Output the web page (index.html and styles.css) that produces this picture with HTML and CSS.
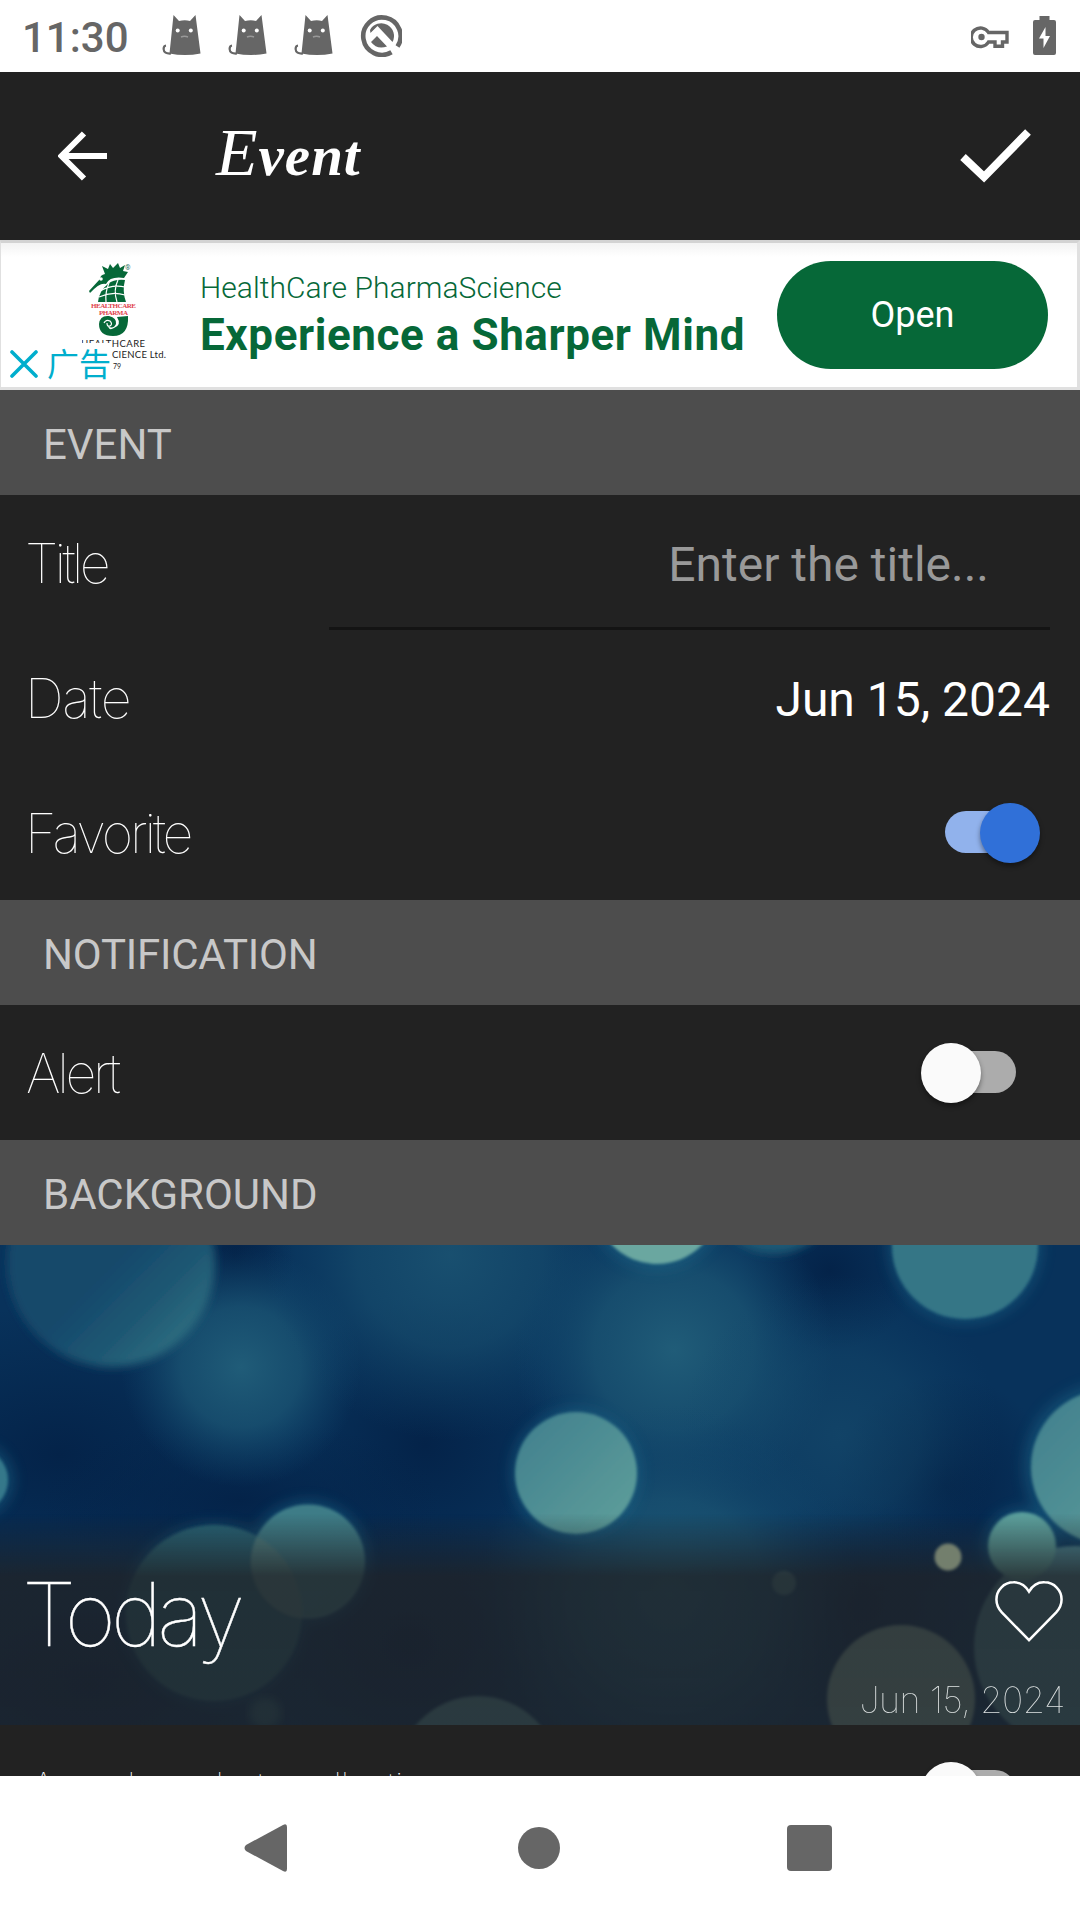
FILE: index.html
```html
<!DOCTYPE html>
<html lang="en">
<head>
<meta charset="utf-8">
<title>Event</title>
<link rel="stylesheet" href="styles.css">
</head>
<body>
<svg width="0" height="0" class="defs">
  <defs>
    <symbol id="cat" viewBox="0 0 40 42">
      <path d="M11.500 1 17 7Q23 5.500 28 7L33.500 1 38.500 39.500Q23 42.500 7.500 39.500Z" fill="#666"/>
      <path d="M9 39.500Q1.800 40 1.600 35Q1.600 31.800 4 31.500" fill="none" stroke="#666" stroke-width="2.200"/>
      <circle cx="15.700" cy="16.500" r="2" fill="#fff"/><circle cx="28.800" cy="16.500" r="2" fill="#fff"/>
      <path d="M19 23Q22.500 21.500 26 23" fill="none" stroke="#999" stroke-width="1.500"/>
    </symbol>
  </defs>
</svg>
<header class="status">
  <span class="clock">11:30</span>
  <svg class="cat" width="40" height="42"><use href="#cat"/></svg>
  <svg class="cat" width="40" height="42"><use href="#cat"/></svg>
  <svg class="cat" width="40" height="42"><use href="#cat"/></svg>
  <svg class="q" width="42" height="42" viewBox="0 0 42 42">
    <path d="M31.500 37.200A18.700 18.700 0 1 1 37.500 31.500" fill="none" stroke="#666" stroke-width="4.600"/>
    <path d="M10 15A12.500 12.500 0 0 1 32.500 27L17.500 11 10.500 18ZM11 27 17 21 27 31.500Q17 35 11 27Z" fill="#666"/>
    <path d="M9.500 22.500 16 16 36 36" fill="none" stroke="#fff" stroke-width="4"/>
  </svg>
  <svg class="key" width="38" height="24" viewBox="0 0 38 24">
    <path d="M17.500 6.500A9.300 9.300 0 1 0 17.500 16H24V20.300H31.500V16H36V6.500Z" fill="none" stroke="#666" stroke-width="3.400"/>
    <circle cx="10.500" cy="11" r="3.200" fill="#666"/>
  </svg>
  <svg class="battery" width="23" height="39" viewBox="0 0 23 39">
    <path d="M6.500 0H16.500V4H21Q23 4 23 6V37Q23 39 21 39H2Q0 39 0 37V6Q0 4 2 4H6.500Z" fill="#666"/>
    <path d="M12.500 11V20H17L10.500 32V22.500H6Z" fill="#fff"/>
  </svg>
</header>

<div class="appbar">
  <svg width="50" height="50" viewBox="0 0 50 50"><path d="M49 25H5M26 2.500 3.500 25 26 47.500" fill="none" stroke="#fff" stroke-width="6"/></svg>
  <h1>Event</h1>
  <svg class="check" width="72" height="54" viewBox="0 0 72 54"><path d="M3 28 24 48 68 3" fill="none" stroke="#fff" stroke-width="8"/></svg>
</div>

<section class="ad">
  <div class="brand">
    <svg width="90" height="110" viewBox="0 0 90 110">
      <g fill="#066838">
        <path d="M7 29 18 17Q18 13 23 12L20 4 26 7 28 2 31 6 36 1 38 6 43 3 41 9 46 10 42 16Q28 14 24 22Q18 20 8 31Z"/>
        <path d="M26 22Q32 17 43 18Q40 29 44 40H16Q17 29 26 22Z"/>
        <path d="M46 54Q47 74 31 74Q17 74 17 62Q18 53 27 54Q35 56 34 62Q31 68 26 64Q27 69 32 66Q40 63 35 55Z"/>
      </g>
      <circle cx="19" cy="17" r="1.800" fill="#fff"/>
      <path d="M22 61Q24 57 28 59Q31 62 28 64Q25 65 25 61M18 29Q30 22 43 25M17 35Q30 29 43 33M27 21Q23 30 24 40M36 18Q31 28 35 40" fill="none" stroke="#fff" stroke-width="1.200"/>
      <g font-family="Liberation Serif, serif" font-weight="700" fill="#e0434c" font-size="7">
        <text x="9" y="46" textLength="45">HEALTHCARE</text><text x="17" y="53" textLength="29">PHARMA</text>
      </g>
      <text x="43" y="8" font-size="7" font-family="Roboto, sans-serif" fill="#376">®</text>
      <g font-family="Lato, sans-serif" font-size="9.500" fill="#222">
        <text x="-1" y="85" textLength="64">HEALTHCARE</text><text x="30" y="96" textLength="54">CIENCE Ltd.</text>
        <text x="31" y="107" font-size="7">79</text>
      </g>
    </svg>
  </div>
  <div class="adchoice">
    <svg width="28" height="28" viewBox="0 0 28 28"><path d="M2 2 26 26M26 2 2 26" stroke="#00aecd" stroke-width="3.600" stroke-linecap="round"/></svg>
    <span>广告</span>
  </div>
  <div class="copy"><p class="adv">HealthCare PharmaScience</p><p class="line">Experience a Sharper Mind</p></div>
  <a class="open">Open</a>
</section>

<main>
  <h2>EVENT</h2>
  <div class="row"><span class="label l-title">Title</span><span class="field">Enter the title...</span></div>
  <div class="row"><span class="label l-date">Date</span><span class="value">Jun 15, 2024</span></div>
  <div class="row"><span class="label l-fav">Favorite</span><span class="switch on"></span></div>
  <h2 class="wide">NOTIFICATION</h2>
  <div class="row"><span class="label l-alert">Alert</span><span class="switch"></span></div>
  <h2>BACKGROUND</h2>
  <div class="cover">
    <svg class="bokeh" width="1080" height="480" viewBox="0 0 1080 480">
      <defs>
        <radialGradient id="soft"><stop offset="0" stop-color="#205c78"/><stop offset=".5" stop-color="#1a5372" stop-opacity=".8"/><stop offset="1" stop-color="#10456b" stop-opacity="0"/></radialGradient>
        <radialGradient id="dark"><stop offset="0" stop-color="#042349"/><stop offset="1" stop-color="#042349" stop-opacity="0"/></radialGradient>
        <linearGradient id="big" x1="0" y1="0" x2="1" y2="1"><stop offset=".5" stop-color="#14486b"/><stop offset=".7" stop-color="#1f5873"/><stop offset=".86" stop-color="#2d6d80"/></linearGradient>
        <linearGradient id="mid" x1="0" y1="0" x2="1" y2="1"><stop offset="0" stop-color="#3f7e8d"/><stop offset="1" stop-color="#60a09b"/></linearGradient>
        <linearGradient id="shade" x1="0" y1="0" x2="0" y2="1"><stop offset=".56" stop-color="#202327" stop-opacity="0"/><stop offset=".69" stop-color="#202327" stop-opacity=".8"/><stop offset="1" stop-color="#202327" stop-opacity=".78"/></linearGradient>
        <filter id="b2"><feGaussianBlur stdDeviation="1.500"/></filter>
        <filter id="b4"><feGaussianBlur stdDeviation="4"/></filter>
        <filter id="b9" x="-40%" y="-40%" width="180%" height="180%"><feGaussianBlur stdDeviation="7"/></filter>
      </defs>
      <rect width="1080" height="480" fill="#08325b"/>
      <ellipse cx="60" cy="210" rx="230" ry="150" fill="url(#dark)"/>
      <ellipse cx="425" cy="200" rx="150" ry="150" fill="url(#dark)"/>
      <ellipse cx="240" cy="255" rx="200" ry="80" fill="url(#dark)"/>
      <ellipse cx="830" cy="25" rx="90" ry="80" fill="url(#dark)"/>
      <ellipse cx="235" cy="10" rx="60" ry="70" fill="url(#dark)"/>
      <ellipse cx="945" cy="240" rx="110" ry="110" fill="url(#dark)"/>
      <ellipse cx="90" cy="440" rx="220" ry="130" fill="url(#dark)"/>
      <ellipse cx="410" cy="400" rx="150" ry="130" fill="url(#dark)"/>
      <ellipse cx="850" cy="360" rx="130" ry="110" fill="url(#dark)"/>
      <circle cx="241" cy="122" r="120" fill="url(#soft)"/>
      <circle cx="450" cy="10" r="185" fill="url(#soft)" opacity=".7"/>
      <circle cx="674" cy="105" r="160" fill="url(#soft)"/>
      <circle cx="840" cy="190" r="160" fill="url(#soft)" opacity=".4"/>
      <circle cx="670" cy="350" r="190" fill="url(#soft)"/>
      <g filter="url(#b9)" fill="#1c6a8c" opacity=".45">
        <circle cx="308" cy="316" r="61"/><circle cx="214" cy="368" r="90"/><circle cx="576" cy="228" r="65"/><circle cx="1108" cy="222" r="84"/><circle cx="965" cy="1" r="77"/><circle cx="657" cy="-44" r="69"/><circle cx="-24" cy="235" r="38"/><circle cx="1022" cy="301" r="38"/>
      </g>
      <circle cx="774" cy="-55" r="64" fill="#1d5875" filter="url(#b4)"/>
      <circle cx="111" cy="18" r="104" fill="url(#big)" filter="url(#b4)"/>
      <g filter="url(#b2)">
        <circle cx="-24" cy="235" r="32" fill="#35788a"/>
        <circle cx="214" cy="368" r="88" fill="#286274"/>
        <circle cx="308" cy="316.500" r="57" fill="#417f89" opacity=".95"/>
        <path d="M251 317A57 57 0 0 0 302 373A88 88 0 0 0 258 292A57 57 0 0 0 251 317" fill="#5c8684" opacity=".6"/>
        <circle cx="576" cy="228" r="61" fill="url(#mid)"/>
        <circle cx="657" cy="-44" r="63" fill="#6ba7a0"/>
        <circle cx="965" cy="1" r="73" fill="#367686"/>
        <circle cx="1075" cy="402" r="101" fill="#4b8795"/>
        <circle cx="1108" cy="222" r="77" fill="url(#mid)"/>
        <circle cx="1022" cy="301" r="34" fill="#5ba09d"/>
        <circle cx="784" cy="338" r="12" fill="#427783"/>
        <circle cx="478" cy="532" r="81" fill="#508a95"/>
        <circle cx="901" cy="454" r="74" fill="#7ca39a"/>
      </g>
      <circle cx="265" cy="468" r="16" fill="#265c70" filter="url(#b4)"/>
      <rect width="1080" height="480" fill="url(#shade)"/>
      <circle cx="948" cy="312" r="13.500" fill="#737f6d" filter="url(#b2)"/>
    </svg>
    <span class="today">Today</span>
    <svg class="heart" width="68" height="63" viewBox="0 0 70 64"><path d="M35 61.500 7 33Q1.500 27 1.500 20A17.500 17.500 0 0 1 19 2Q29 1.500 35 11.500Q41 1.500 51 2A17.500 17.500 0 0 1 68.500 20Q68.500 27 63 33Z" fill="none" stroke="#fff" stroke-width="2.600"/></svg>
    <span class="when">Jun 15, 2024</span>
  </div>
  <div class="row tail"><span class="hint">A random photo collection</span><span class="switch"></span></div>
</main>

<nav>
  <svg width="1080" height="144" viewBox="0 0 1080 144" fill="#666">
    <path d="M246 69 283 49Q287 47 287 51V93Q287 97 283 95L246 75Q243 72 246 69Z"/>
    <circle cx="539" cy="72" r="21"/><rect x="787" y="49" width="45" height="46" rx="4"/>
  </svg>
</nav>
</body>
</html>
```
FILE: styles.css
```css
* { box-sizing: border-box; margin: 0; padding: 0; }
body {
  width: 1080px; height: 1920px; overflow: hidden;
  display: flex; flex-direction: column;
  background: #222; color: #fff; font-family: Roboto, sans-serif;
}
svg { display: block; flex: none; }
.defs { position: absolute; }

.status { height: 72px; flex: none; background: #fff; display: flex; align-items: center; padding: 0 24px 0 22px; }
.clock { width: 140px; font-size: 42px; font-weight: 500; color: #666; padding-top: 3px; }
.cat { margin-right: 26px; margin-top: -2px; }
.q { margin-top: -1px; }
.key { margin-left: auto; margin-right: 24px; margin-top: 3px; }
.battery { margin-top: -1px; }

.appbar { height: 168px; flex: none; display: flex; align-items: center; padding: 0 48px 0 58px; }
.appbar h1 {
  margin-left: 108px; padding-bottom: 4px; height: 84px;
  font: italic 700 57px/84px "Liberation Serif", serif; letter-spacing: 1px;
}
.appbar h1::first-letter { font-size: 68px; line-height: 60px; font-weight: 400; }
.check { margin-left: auto; }

.ad {
  position: relative; height: 150px; flex: none; display: flex; align-items: center;
  background: linear-gradient(#f3f3f3, #fff 14px);
  border: solid #e0e0e0; border-width: 3px 3px 3px 1px; border-top-color: #d3d3d3; color: #066838;
}
.brand { width: 199px; padding: 0 0 0 81px; margin-top: 4px; }
.adchoice {
  position: absolute; left: 0; bottom: 2px; height: 42px; width: 111px; padding-left: 9px;
  display: flex; align-items: center; gap: 9px; background: #fff; color: #00aecd;
  font: 32px/38px "Noto Sans CJK SC", sans-serif;
}
.adchoice span { margin-top: -4px; }
.copy { width: 577px; white-space: nowrap; }
.adv { font-size: 30px; font-weight: 300; line-height: 38px; letter-spacing: .05px; margin-top: 2px; }
.line { font-size: 44px; font-weight: 700; line-height: 56px; letter-spacing: .58px; }
.open {
  width: 271px; height: 108px; margin-top: -1px; border-radius: 54px;
  background: #066838; color: #fff; font-size: 36px; line-height: 108px; text-align: center;
}

main { height: 1386px; flex: none; overflow: hidden; }
h2 { height: 105px; padding-left: 43px; background: #4d4d4d; color: #c8c8c8; font-size: 42px; font-weight: 400; line-height: 109px; }
.wide { letter-spacing: -.2px; }
.row { height: 135px; display: flex; align-items: center; justify-content: space-between; padding: 0 30px 0 27px; }
.label { font-family: Inter, sans-serif; font-weight: 100; font-size: 54px; line-height: 64px; letter-spacing: -3px; margin-left: -2px; padding-top: 2px; }
.l-title { letter-spacing: -3.700px; }
.l-date { letter-spacing: -1.300px; }
.l-fav { letter-spacing: -3.100px; }
.l-alert { letter-spacing: -3.400px; margin-left: -1px; }
.field { width: 721px; height: 135px; border-bottom: 3px solid #141414; padding-right: 61px; text-align: right; font-size: 48px; line-height: 139px; color: #999; }
.value { font-size: 48px; padding-top: 3px; }
.switch { position: relative; width: 95px; height: 60px; margin-right: 34px; }
.switch::before { content: ""; position: absolute; inset: 8px 0 10px 23px; border-radius: 22px; background: #acacac; }
.switch::after { content: ""; position: absolute; left: 0; top: 0; width: 60px; height: 60px; border-radius: 50%; background: #fafafa; box-shadow: 0 3px 5px #0006; }
.on { margin-right: 10px; }
.on::before { inset: 8px 23px 10px 0; background: #91b2ec; }
.on::after { left: 35px; background: #3070d8; }

.cover { position: relative; height: 480px; overflow: hidden; }
.today { position: absolute; left: 22px; top: 314px; font: 100 88px/110px Inter, sans-serif; letter-spacing: -4.700px; -webkit-text-stroke: .4px #fff; }
.heart { position: absolute; left: 995px; top: 335px; }
.when { position: absolute; right: 15px; top: 433px; font: 100 36px/44px Inter, sans-serif; letter-spacing: -.5px; color: #dfe3e3; }
.tail { align-items: flex-start; padding-top: 37px; }
.hint { font: 100 36px/40px Inter, sans-serif; margin: 4px 0 0 5px; letter-spacing: -.5px; }

nav { height: 144px; flex: none; background: #fff; }
```
